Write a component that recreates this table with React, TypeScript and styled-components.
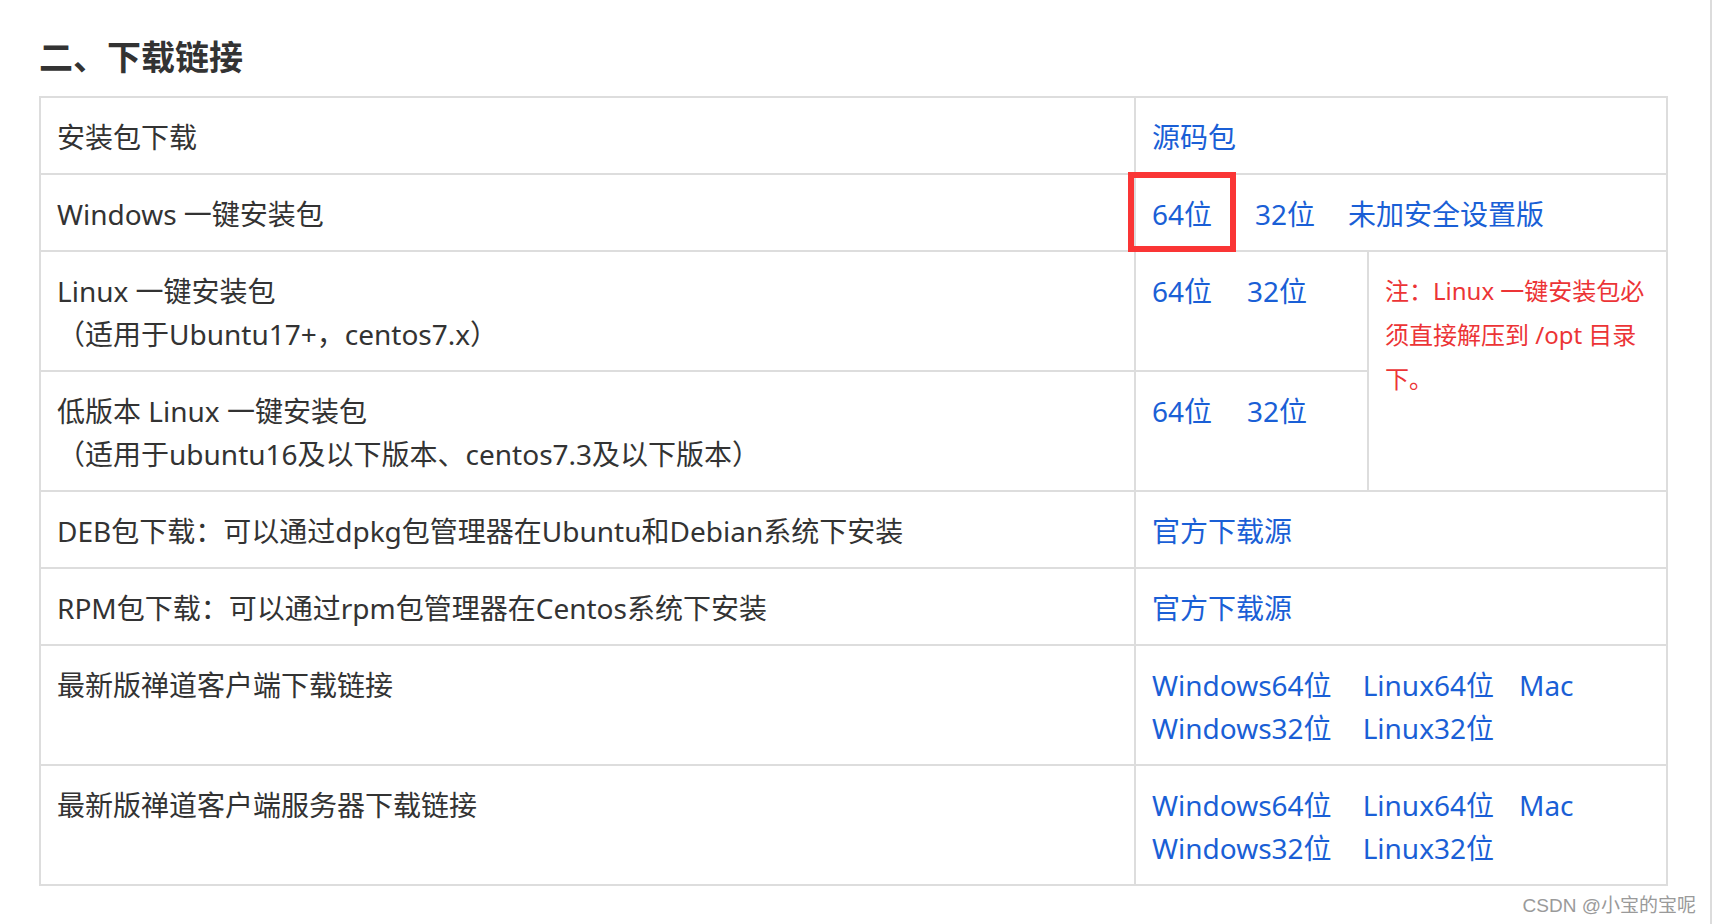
import styled, { createGlobalStyle } from "styled-components";

const GlobalStyle = createGlobalStyle`
  html, body {
    margin: 0;
    padding: 0;
    background: #fff;
  }
  *, *::before, *::after {
    box-sizing: border-box;
  }
`;

const Page = styled.div`
  width: 1712px;
  min-height: 100vh;
  padding: 33px 0 0 39px;
  border-right: 2px solid #dcdcdc;
  font-family: "Noto Sans", "Noto Sans CJK SC", sans-serif;
  color: #333;
`;

const Title = styled.h2`
  margin: 0 0 15px;
  font-size: 34px;
  line-height: 48px;
  font-weight: 700;
  color: #333;
`;

const Table = styled.div`
  display: grid;
  grid-template-columns: 1095px 233px 299px;
  width: 1629px;
  border-top: 2px solid #ddd;
  border-left: 2px solid #ddd;
`;

const Cell = styled.div<{ $span?: number; $rows?: number }>`
  grid-column: span ${(p) => p.$span ?? 1};
  grid-row: span ${(p) => p.$rows ?? 1};
  padding: 18px 16px 14px;
  border-right: 2px solid #ddd;
  border-bottom: 2px solid #ddd;
  font-size: 28px;
  line-height: 43px;
  color: #333;
`;

const Line = styled.div`
  white-space: nowrap;
`;

const Note = styled.div`
  margin-top: -1px;
  font-size: 24px;
  line-height: 44px;
  color: #ec3436;
`;

const LinkRow = styled.div<{ $gap: number }>`
  display: flex;
  gap: ${(p) => p.$gap}px;
  white-space: nowrap;
`;

const Link = styled.a<{ $marked?: boolean; $after?: number }>`
  position: relative;
  margin-right: ${(p) => p.$after ?? 0}px;
  color: #1a5fd6;
  text-decoration: none;

  ${(p) =>
    p.$marked &&
    `
    &::after {
      content: "";
      position: absolute;
      left: -24px;
      top: -21px;
      width: 108px;
      height: 80px;
      border: 6px solid #fa3535;
    }
  `}
`;

const Watermark = styled.div`
  display: flex;
  justify-content: flex-end;
  padding-right: 14px;
  margin-top: 8px;
  font-family: "Liberation Sans", "Noto Sans CJK SC", sans-serif;
  font-size: 19px;
  line-height: 24px;
  color: #9a9a9a;
  text-shadow: 0 0 1px #fff;
`;

const clientLinks = [
  ["Windows64位", "Linux64位", "Mac"],
  ["Windows32位", "Linux32位"],
];

const ClientLinks = () => (
  <>
    {clientLinks.map((line, i) => (
      <LinkRow key={i} $gap={25}>
        {line.map((t, j) => (
          <Link key={t} href="#" $after={j === 0 ? 6 : 0}>
            {t}
          </Link>
        ))}
      </LinkRow>
    ))}
  </>
);

const App = () => {
  return (
    <>
      <GlobalStyle />
      <Page>
        <Title>二、下载链接</Title>
        <Table>
          <Cell>安装包下载</Cell>
          <Cell $span={2}>
            <Link href="#">源码包</Link>
          </Cell>

          <Cell>Windows 一键安装包</Cell>
          <Cell $span={2}>
            <LinkRow $gap={43}>
              <Link href="#" $marked>
                64位
              </Link>
              <Link href="#" $after={-10}>
                32位
              </Link>
              <Link href="#">未加安全设置版</Link>
            </LinkRow>
          </Cell>

          <Cell>
            <Line>Linux 一键安装包</Line>
            <Line>（适用于Ubuntu17+，centos7.x）</Line>
          </Cell>
          <Cell>
            <LinkRow $gap={35}>
              <Link href="#">64位</Link>
              <Link href="#">32位</Link>
            </LinkRow>
          </Cell>
          <Cell $rows={2}>
            <Note>注：Linux 一键安装包必须直接解压到 /opt 目录下。</Note>
          </Cell>

          <Cell>
            <Line>低版本 Linux 一键安装包</Line>
            <Line>（适用于ubuntu16及以下版本、centos7.3及以下版本）</Line>
          </Cell>
          <Cell>
            <LinkRow $gap={35}>
              <Link href="#">64位</Link>
              <Link href="#">32位</Link>
            </LinkRow>
          </Cell>

          <Cell>DEB包下载：可以通过dpkg包管理器在Ubuntu和Debian系统下安装</Cell>
          <Cell $span={2}>
            <Link href="#">官方下载源</Link>
          </Cell>

          <Cell>RPM包下载：可以通过rpm包管理器在Centos系统下安装</Cell>
          <Cell $span={2}>
            <Link href="#">官方下载源</Link>
          </Cell>

          <Cell>最新版禅道客户端下载链接</Cell>
          <Cell $span={2}>
            <ClientLinks />
          </Cell>

          <Cell>最新版禅道客户端服务器下载链接</Cell>
          <Cell $span={2}>
            <ClientLinks />
          </Cell>
        </Table>
        <Watermark>CSDN @小宝的宝呢</Watermark>
      </Page>
    </>
  );
};

export default App;
